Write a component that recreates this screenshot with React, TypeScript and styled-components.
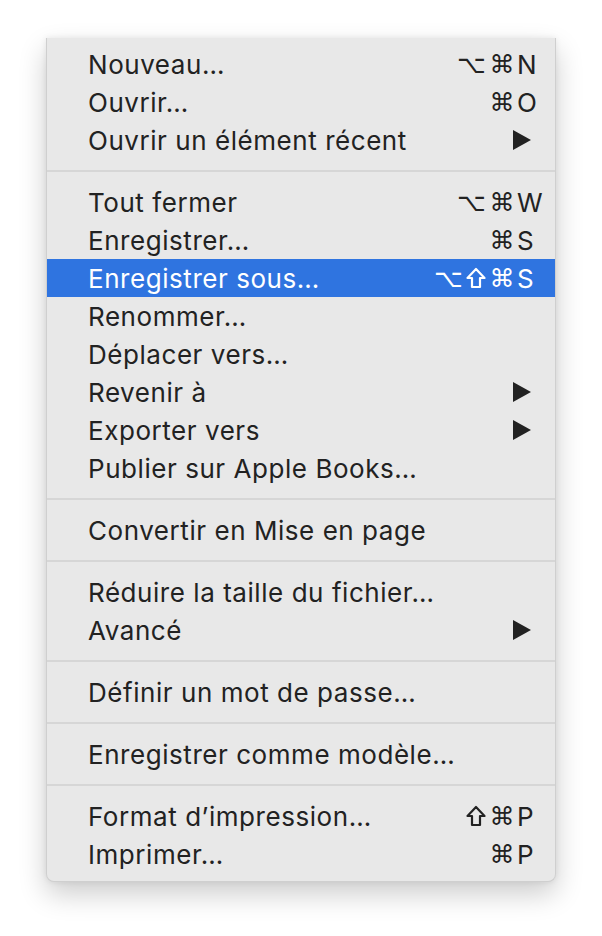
import styled, { createGlobalStyle } from "styled-components";

const GlobalStyle = createGlobalStyle`
  html, body {
    margin: 0;
    padding: 0;
    background: #ffffff;
  }
  body {
    font-family: Inter, "Noto Sans", "DejaVu Sans", sans-serif;
  }
`;

const Page = styled.div`
  width: 602px;
  height: 936px;
  padding: 38px 0 0 46px;
  box-sizing: border-box;
`;

const Menu = styled.div`
  width: 510px;
  box-sizing: border-box;
  background: #e8e8e8;
  border: 1px solid #cfcfcf;
  border-top: none;
  border-radius: 0 0 8px 8px;
  box-shadow: 0 12px 28px rgba(0, 0, 0, 0.2), 0 0 6px rgba(0, 0, 0, 0.08);
  padding: 7px 0 8px;
`;

const Row = styled.div<{ $active?: boolean }>`
  display: flex;
  align-items: center;
  height: 38px;
  padding: 0 12px 0 41px;
  background: ${(p) => (p.$active ? "#2f74e0" : "transparent")};
  color: ${(p) => (p.$active ? "#ffffff" : "#222222")};
  font-size: 26px;
  letter-spacing: 0.55px;
`;

const Label = styled.span`
  flex: 1;
  white-space: nowrap;
`;

const Shortcut = styled.span`
  display: flex;
  align-items: center;
`;

const Mods = styled.span`
  display: flex;
  align-items: center;
  gap: 3px;
  font-family: "DejaVu Sans", sans-serif;
  font-size: 25px;
  margin-right: 2px;
`;

const ShiftIcon = styled.svg`
  width: 20px;
  height: 22px;
  fill: none;
  stroke: currentColor;
  stroke-width: 2.2;
  stroke-linejoin: round;
`;

const Key = styled.span`
  width: 26px;
  text-align: left;
  letter-spacing: 0;
`;

const Arrow = styled.svg`
  width: 20px;
  height: 22px;
  margin-right: 11px;
  fill: currentColor;
`;

const Separator = styled.div`
  height: 2px;
  margin: 11px 0;
  background: #d6d6d6;
`;

type Item = { label: string; mods?: string; key?: string; sub?: boolean; active?: boolean };

const groups: Item[][] = [
  [
    { label: "Nouveau…", mods: "⌥⌘", key: "N" },
    { label: "Ouvrir…", mods: "⌘", key: "O" },
    { label: "Ouvrir un élément récent", sub: true },
  ],
  [
    { label: "Tout fermer", mods: "⌥⌘", key: "W" },
    { label: "Enregistrer…", mods: "⌘", key: "S" },
    { label: "Enregistrer sous…", mods: "⌥⇧⌘", key: "S", active: true },
    { label: "Renommer…" },
    { label: "Déplacer vers…" },
    { label: "Revenir à", sub: true },
    { label: "Exporter vers", sub: true },
    { label: "Publier sur Apple Books…" },
  ],
  [{ label: "Convertir en Mise en page" }],
  [
    { label: "Réduire la taille du fichier…" },
    { label: "Avancé", sub: true },
  ],
  [{ label: "Définir un mot de passe…" }],
  [{ label: "Enregistrer comme modèle…" }],
  [
    { label: "Format d’impression…", mods: "⇧⌘", key: "P" },
    { label: "Imprimer…", mods: "⌘", key: "P" },
  ],
];

function Modifier({ m }: { m: string }) {
  if (m === "⇧") {
    return (
      <ShiftIcon viewBox="0 0 20 22" aria-label="⇧">
        <path d="M10 2 L18.5 11 L14 11 L14 20 L6 20 L6 11 L1.5 11 Z" />
      </ShiftIcon>
    );
  }
  return <span>{m}</span>;
}

function MenuRow({ item }: { item: Item }) {
  return (
    <Row $active={item.active}>
      <Label>{item.label}</Label>
      {item.key && (
        <Shortcut>
          <Mods>
            {item.mods!.split("").map((m, i) => (
              <Modifier key={i} m={m} />
            ))}
          </Mods>
          <Key>{item.key}</Key>
        </Shortcut>
      )}
      {item.sub && (
        <Arrow viewBox="0 0 20 22">
          <path d="M1 1 L19 11 L1 21 Z" />
        </Arrow>
      )}
    </Row>
  );
}

export default function App() {
  return (
    <>
      <GlobalStyle />
      <Page>
        <Menu>
          {groups.map((g, gi) => (
            <div key={gi}>
              {gi > 0 && <Separator />}
              {g.map((item) => (
                <MenuRow key={item.label} item={item} />
              ))}
            </div>
          ))}
        </Menu>
      </Page>
    </>
  );
}
